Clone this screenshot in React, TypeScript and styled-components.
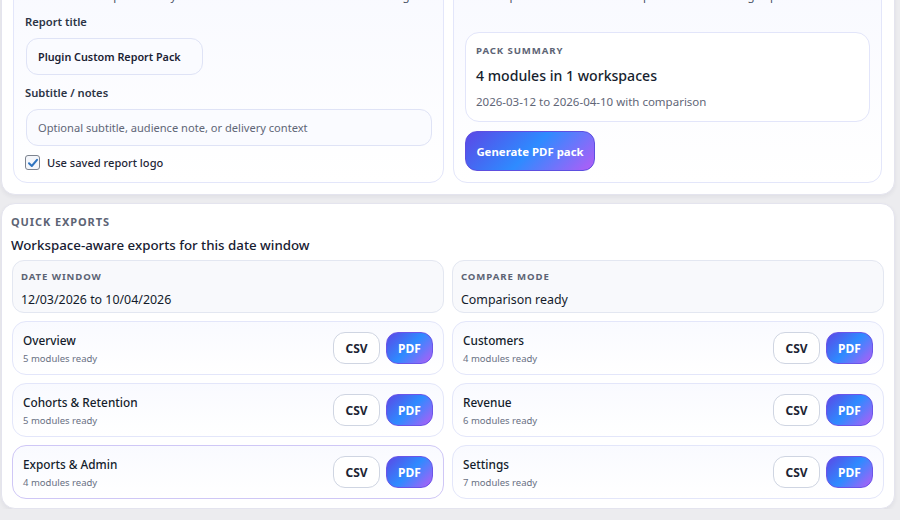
import React from "react";
import styled, { createGlobalStyle } from "styled-components";

const GlobalStyle = createGlobalStyle`
  html, body {
    margin: 0;
    padding: 0;
    background: #ececef;
    font-family: "Noto Sans", "Open Sans", sans-serif;
    color: #1c2536;
    overflow: hidden;
  }
  * { box-sizing: border-box; }
`;

const Page = styled.div`
  padding: 0 5px 0 1px;
  display: flex;
  flex-direction: column;
  gap: 8px;
`;

const Card = styled.section<{ $top?: boolean }>`
  background: #fff;
  border: 1px solid #e4e4ee;
  border-radius: 14px;
  box-shadow: 0 2px 4px rgba(30, 30, 60, 0.06);
  margin-top: ${(p) => (p.$top ? "-38px" : "0")};
`;

const TopCard = styled(Card)`
  padding: 12px 12px 11px 11px;
  display: grid;
  grid-template-columns: 431px 1fr;
  gap: 9px;
`;

const Panel = styled.div`
  border: 1px solid #e3e6fa;
  border-radius: 14px;
  background: linear-gradient(180deg, #f8f9ff 0%, #ffffff 100%);
  padding: 11px;
  display: flex;
  flex-direction: column;
`;

const Hint = styled.ul<{ $gap: number }>`
  margin: 0 0 ${(p) => p.$gap}px;
  padding-left: 32px;
  font-size: 11.5px;
  line-height: 18px;
  color: #4b5366;
  list-style: none;
  white-space: nowrap;
`;

const Label = styled.div<{ $mt?: number }>`
  font-size: 11.2px;
  line-height: 16px;
  font-weight: 600;
  color: #2c3445;
  margin-top: ${(p) => p.$mt ?? 0}px;
`;

const Input = styled.div<{ $full?: boolean; $placeholder?: boolean }>`
  margin-top: 8px;
  height: 37px;
  width: ${(p) => (p.$full ? "406px" : "177px")};
  margin-left: 1px;
  border: 1px solid #dfe3f6;
  border-radius: 12px;
  background: #fafbff;
  display: flex;
  align-items: center;
  padding: 0 11px;
  font-size: ${(p) => (p.$placeholder ? "11.1px" : "10.8px")};
  font-weight: ${(p) => (p.$placeholder ? 400 : 600)};
  color: ${(p) => (p.$placeholder ? "#5f6677" : "#1a2233")};
  white-space: nowrap;
`;

const CheckRow = styled.label`
  margin-top: 9px;
  display: flex;
  align-items: center;
  gap: 7px;
  font-size: 11.1px;
  font-weight: 500;
  color: #1f2737;
`;

const Box = styled.span`
  width: 15px;
  height: 15px;
  border: 1px solid #7d838f;
  border-radius: 3px;
  background: #f4f6fb;
  display: flex;
  align-items: center;
  justify-content: center;
`;

const Summary = styled.div`
  border: 1px solid #e2e5fa;
  border-radius: 14px;
  background: #fff;
  padding: 11px 10px 11px;
`;

const Eyebrow = styled.div<{ $size?: number }>`
  font-size: ${(p) => p.$size ?? 9.6}px;
  line-height: 14px;
  font-weight: 700;
  letter-spacing: 0.9px;
  text-transform: uppercase;
  color: #5d6475;
`;

const SummaryTitle = styled.div`
  margin-top: 8px;
  font-size: 14.1px;
  line-height: 20px;
  font-weight: 500;
  color: #161e2e;
`;

const SummaryText = styled.div`
  margin-top: 8px;
  font-size: 11.5px;
  line-height: 16px;
  color: #5f6677;
`;

const gradient = "linear-gradient(135deg, #5b48e6 0%, #2e8bff 50%, #b45cf6 100%)";

const GenerateButton = styled.button`
  margin-top: 9px;
  align-self: flex-start;
  height: 40px;
  width: 130px;
  padding: 0;
  border: 1px solid #5d4fe0;
  border-radius: 12px;
  background: ${gradient};
  color: #fff;
  font-family: inherit;
  font-size: 11.4px;
  font-weight: 700;
`;

const BottomCard = styled(Card)`
  padding: 11px 10px 9px 9px;
`;

const Heading = styled.div`
  margin-top: 7px;
  font-size: 13.3px;
  line-height: 18px;
  font-weight: 500;
  color: #172032;
`;

const Grid = styled.div`
  margin-top: 6px;
  margin-left: 1px;
  display: grid;
  grid-template-columns: 1fr 1fr;
  gap: 8px;
`;

const InfoBox = styled.div`
  border: 1px solid #e3e7f1;
  border-radius: 12px;
  background: #f8f9fc;
  padding: 9px 8px 4px;
  height: 53px;
`;

const InfoValue = styled.div`
  margin-top: 7px;
  font-size: 12.4px;
  line-height: 18px;
  color: #131b2b;
`;

const ModuleRow = styled.div<{ $active?: boolean }>`
  height: 54px;
  border: 1px solid ${(p) => (p.$active ? "#cfc7f6" : "#e3e6fa")};
  border-radius: 14px;
  background: linear-gradient(180deg, #f9faff 0%, #ffffff 100%);
  padding: 0 10px;
  display: flex;
  align-items: center;
  justify-content: space-between;
`;

const ModuleName = styled.div`
  font-size: 11.8px;
  line-height: 17px;
  font-weight: 500;
  color: #141c2c;
`;

const ModuleMeta = styled.div`
  margin-top: 3px;
  font-size: 9.5px;
  line-height: 13px;
  color: #697083;
`;

const Actions = styled.div`
  display: flex;
  gap: 6px;
`;

const ExportButton = styled.button<{ $primary?: boolean }>`
  height: 32px;
  width: 47px;
  border-radius: 12px;
  border: 1px solid ${(p) => (p.$primary ? "#6a55e8" : "#cfd5e2")};
  background: ${(p) => (p.$primary ? gradient : "#fff")};
  color: ${(p) => (p.$primary ? "#fff" : "#1c2433")};
  font-family: inherit;
  font-size: 12px;
  font-weight: 700;
  padding: 0;
`;

const modules = [
  { name: "Overview", count: 5 },
  { name: "Customers", count: 4 },
  { name: "Cohorts & Retention", count: 5 },
  { name: "Revenue", count: 6 },
  { name: "Exports & Admin", count: 4, active: true },
  { name: "Settings", count: 7 },
];

export default function App() {
  return (
    <>
      <GlobalStyle />
      <Page>
        <TopCard $top>
          <Panel>
            <Hint $gap={9}>
              <li>Name the pack clearly and decide whether to use saved branding.</li>
            </Hint>
            <Label>Report title</Label>
            <Input>Plugin Custom Report Pack</Input>
            <Label $mt={10}>Subtitle / notes</Label>
            <Input $full $placeholder>
              Optional subtitle, audience note, or delivery context
            </Input>
            <CheckRow>
              <Box>
                <svg width="12" height="12" viewBox="0 0 12 12">
                  <path d="M2 6.2 L4.8 9 L10 2.8" fill="none" stroke="#2f74c0" strokeWidth="2" strokeLinecap="round" strokeLinejoin="round" />
                </svg>
              </Box>
              Use saved report logo
            </CheckRow>
          </Panel>
          <Panel>
            <Hint $gap={27}>
              <li>Export the current module pack without leaving Exports.</li>
            </Hint>
            <Summary>
              <Eyebrow>Pack summary</Eyebrow>
              <SummaryTitle>4 modules in 1 workspaces</SummaryTitle>
              <SummaryText>2026-03-12 to 2026-04-10 with comparison</SummaryText>
            </Summary>
            <GenerateButton>Generate PDF pack</GenerateButton>
          </Panel>
        </TopCard>

        <BottomCard>
          <Eyebrow $size={11}>Quick exports</Eyebrow>
          <Heading>Workspace-aware exports for this date window</Heading>
          <Grid>
            <InfoBox>
              <Eyebrow>Date window</Eyebrow>
              <InfoValue>12/03/2026 to 10/04/2026</InfoValue>
            </InfoBox>
            <InfoBox>
              <Eyebrow>Compare mode</Eyebrow>
              <InfoValue>Comparison ready</InfoValue>
            </InfoBox>
            {modules.map((m) => (
              <ModuleRow key={m.name} $active={m.active}>
                <div>
                  <ModuleName>{m.name}</ModuleName>
                  <ModuleMeta>{m.count} modules ready</ModuleMeta>
                </div>
                <Actions>
                  <ExportButton>CSV</ExportButton>
                  <ExportButton $primary>PDF</ExportButton>
                </Actions>
              </ModuleRow>
            ))}
          </Grid>
        </BottomCard>
      </Page>
    </>
  );
}
